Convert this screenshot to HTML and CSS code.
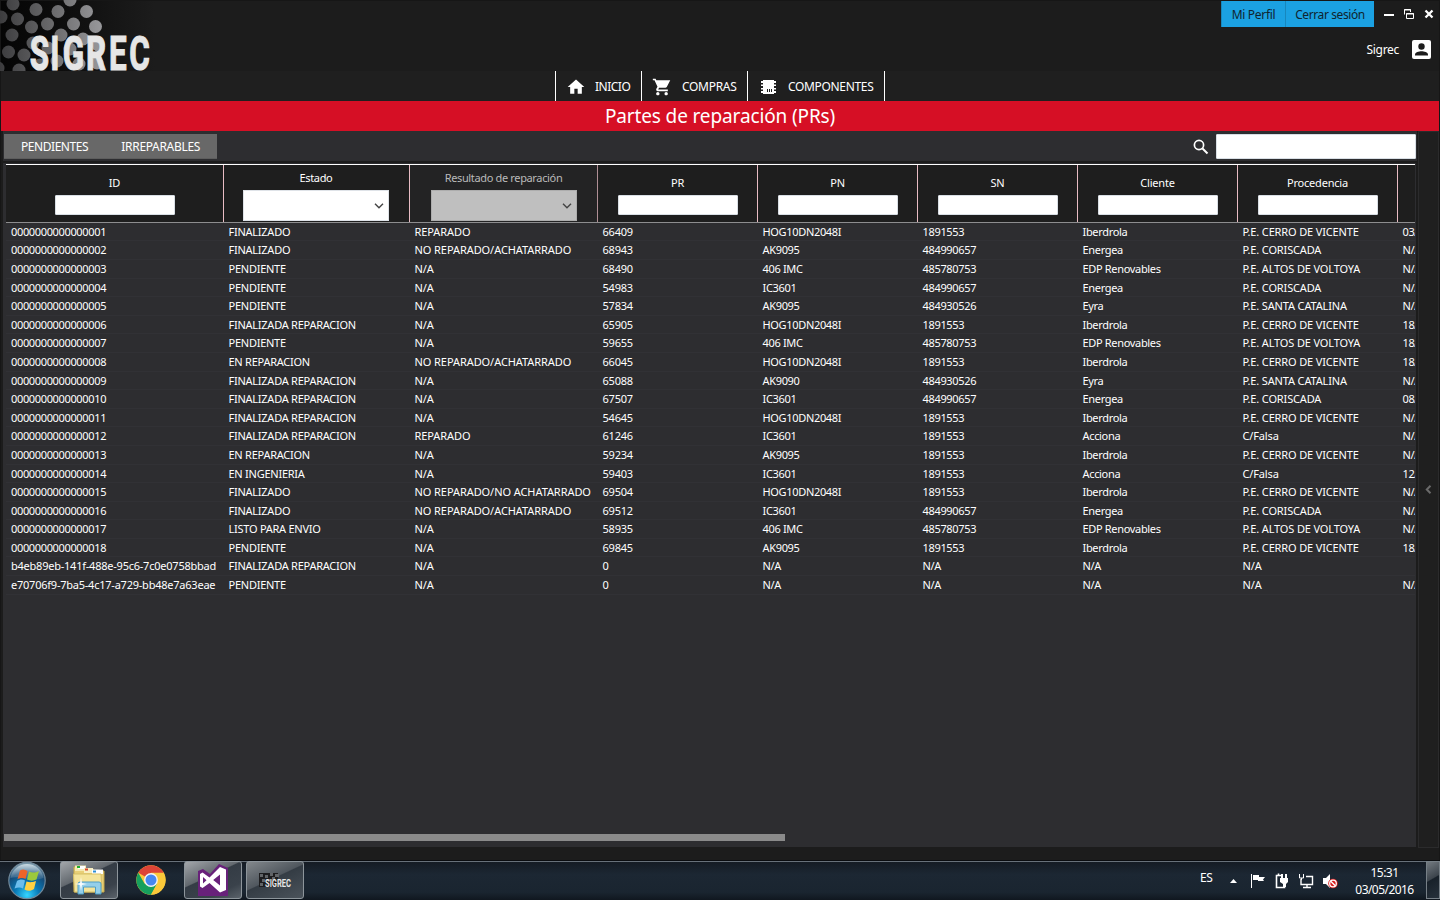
FILE: index.html
```
<!DOCTYPE html>
<html lang="es">
<head>
<meta charset="utf-8">
<title>Sigrec</title>
<link rel="stylesheet" href="styles.css">
</head>
<body>
<div class="window">
  <header class="top">
    <svg class="logo" width="155" height="71" viewBox="0 0 155 71">
      <defs>
        <linearGradient id="fade"><stop offset="0" stop-color="#050505"/><stop offset=".35" stop-color="#0c0c0c"/><stop offset="1" stop-color="#1c1c1c"/></linearGradient>
        <linearGradient id="dots" gradientUnits="userSpaceOnUse" x1="0" y1="30" x2="105" y2="30"><stop offset="0" stop-color="#3c3c3e"/><stop offset=".5" stop-color="#6a6a6c"/><stop offset="1" stop-color="#9b9b9e"/></linearGradient>
      </defs>
      <rect x="1" y="1" width="154" height="70" fill="url(#fade)"/>
      <g fill="url(#dots)">
        <circle cx="13" cy="4" r="6.5"/><circle cx="36" cy="9.500" r="6.500"/><circle cx="58" cy="11.500" r="6.500"/><circle cx="70" cy="0" r="6.500"/><circle cx="86.500" cy="11.500" r="6.500"/>
        <circle cx="1" cy="17" r="6.500"/><circle cx="17.500" cy="19" r="6.500"/><circle cx="31.500" cy="27" r="6.500"/><circle cx="47.500" cy="24" r="6.500"/><circle cx="73.500" cy="24" r="6.500"/><circle cx="95.500" cy="26.500" r="6.500"/>
        <circle cx="12" cy="35" r="6.500"/><circle cx="61" cy="35" r="6.500"/><circle cx="83" cy="39" r="6.500"/><circle cx="33" cy="43" r="6.500"/><circle cx="48" cy="48" r="6.500"/><circle cx="98" cy="45" r="6.500"/><circle cx="70" cy="49" r="6.500"/>
        <circle cx="8.500" cy="52" r="6.500"/><circle cx="24" cy="55" r="6.500"/><circle cx="57" cy="61" r="6.500"/><circle cx="79" cy="64" r="6.500"/><circle cx="40" cy="65" r="6.500"/><circle cx="19" cy="70" r="6.500"/><circle cx="-2" cy="68" r="6.500"/><circle cx="97" cy="63" r="6.500"/>
      </g>
      <text class="logo-text big" transform="scale(.64 1)" x="46.500 78.500 98 134.500 170.500 202" y="70.500" font-size="49">SIGREC</text>
    </svg>
    <div class="account">
      <div class="controls">
        <button class="blue perfil">Mi Perfil</button><button class="blue cerrar">Cerrar sesión</button>
        <svg class="winbtns" width="65" height="27" viewBox="0 0 65 27" fill="none" stroke="#fff">
          <path d="M10 15H20" stroke-width="2"/>
          <path d="M30.500 14.500V9.500H36.500V12M30 10H37M32.500 13.500H39.500V18.500H32.500ZM32 14H40"/>
          <path d="M51.500 10.500L58.500 17.500M58.500 10.500L51.500 17.500" stroke-width="2.300"/>
        </svg>
      </div>
      <div class="user"><span>Sigrec</span>
        <svg width="19" height="19" viewBox="0 0 19 19"><rect width="19" height="19" rx="2" fill="#fff"/><circle cx="9.500" cy="6.500" r="3.200" fill="#1c1c1c"/><path d="M3 15.500V14.500C3 12.300 7 11.200 9.500 11.200S16 12.300 16 14.500V15.500Z" fill="#1c1c1c"/></svg>
      </div>
    </div>
  </header>
  <nav class="nav">
    <a class="n1"><svg width="20" height="20" viewBox="0 0 24 24"><path fill="#fff" d="M10 20v-6h4v6h5v-8h3L12 3 2 12h3v8z"/></svg><span>INICIO</span></a>
    <a class="n2"><svg width="20" height="20" viewBox="0 0 24 24"><path fill="#fff" d="M7 18c-1.100 0-2 .9-2 2s.9 2 2 2 2-.9 2-2-.9-2-2-2zM1 2v2h2l3.600 7.600-1.400 2.400c-.7 1.300.3 3 1.800 3h12v-2H7.400l1.100-2h7.500c.7 0 1.400-.4 1.700-1L21.900 4H5.200L4.300 2H1zm16 16c-1.100 0-2 .9-2 2s.9 2 2 2 2-.9 2-2-.9-2-2-2z"/></svg><span>COMPRAS</span></a>
    <a class="n3"><svg width="15" height="14" viewBox="0 0 15 14"><path fill="#fff" d="M2 0H13V14H2ZM0 1H15V3H0ZM0 4.500H15V6H0ZM0 8H15V9.500H0ZM0 11H15V13H0Z"/><path d="M6.500 9V12M8.500 9V12M10.500 9V12" stroke="#1f1f1f"/></svg><span>COMPONENTES</span></a>
  </nav>
  <h1 class="title"><span>Partes de reparación (PRs)</span></h1>
  <main class="main">
    <div class="content">
      <div class="toolbar">
        <div class="tabs"><span class="t1">PENDIENTES</span><span class="t2">IRREPARABLES</span></div>
        <div class="search">
          <svg width="16" height="16" viewBox="0 0 16 16" fill="none" stroke="#fff"><circle cx="6" cy="6" r="4.600" stroke-width="1.700"/><path d="M9.500 9.500L14.500 14.500" stroke-width="2"/></svg>
          <input type="text" aria-label="Buscar">
        </div>
      </div>
      <div class="panel">
        <div class="table" id="table">
          <div class="row head">
            <div class="th"><label>ID</label><input></div>
            <div class="th combo"><label>Estado</label><div class="select"><svg width="10" height="6" viewBox="0 0 10 6"><path d="M1 .8L5 4.800L9 .8"/></svg></div></div>
            <div class="th combo off"><label>Resultado de reparación</label><div class="select"><svg width="10" height="6" viewBox="0 0 10 6"><path d="M1 .8L5 4.800L9 .8"/></svg></div></div>
            <div class="th"><label>PR</label><input></div>
            <div class="th"><label>PN</label><input></div>
            <div class="th"><label>SN</label><input></div>
            <div class="th"><label>Cliente</label><input></div>
            <div class="th"><label>Procedencia</label><input></div>
            <div class="th last"></div>
          </div>
        </div>
        <div class="scroll"></div>
      </div>
    </div>
    <aside class="side"><svg width="7" height="9" viewBox="0 0 7 9"><path d="M5.500 .8L1.800 4.500L5.500 8.200" fill="none" stroke="#6a6a6a" stroke-width="2"/></svg></aside>
  </main>
</div>
<footer class="taskbar">
  <div class="start">
    <svg width="40" height="39" viewBox="0 0 40 39">
      <defs><radialGradient id="orb" cx=".5" cy=".9" r=".85"><stop offset="0" stop-color="#35d5ff"/><stop offset=".4" stop-color="#0878b5"/><stop offset=".75" stop-color="#164a76"/><stop offset="1" stop-color="#7898aa"/></radialGradient>
      <linearGradient id="gloss" x2="0" y2="1"><stop offset="0" stop-color="#dce8ee" stop-opacity=".85"/><stop offset="1" stop-color="#7ca0b8" stop-opacity=".25"/></linearGradient></defs>
      <circle cx="20" cy="19.500" r="18.200" fill="url(#orb)" stroke="#71899a" stroke-width="1.200"/>
      <path d="M3.500 17A16.700 16.700 0 0 1 36.500 17C27 21 13 14 3.500 17Z" fill="url(#gloss)"/>
      <path d="M13 9.500C16 7.500 18 8.500 20.500 10L18.500 18C16 16.500 14 16.500 10.500 18Z" fill="#ee6428"/>
      <path d="M22 10.500C25 12 28 12 32 10L29.500 18.500C26 20 23.500 20 20 18.500Z" fill="#9cc93c"/>
      <path d="M10 20C13 18 15.500 18 18 19.500L16 27.500C13.500 26 11 26 7.500 27.500Z" fill="#6cbdec"/>
      <path d="M19.500 20.500C22.500 21.500 25 21.500 29 20L27 28C23.500 30.500 20.500 30 17.500 28.500Z" fill="#ffd142"/>
    </svg>
  </div>
  <div class="task files">
    <svg width="34" height="32" viewBox="0 0 34 32">
      <path d="M2 3H12L13 5H21L22 7H32V28H2Z" fill="#e8cf77" stroke="#c6a94b"/>
      <path d="M3 1.500H14V7H3Z" fill="#f5e9b0"/><path d="M6 2H13V5H6Z" fill="#fff"/><path d="M5 2H8V4H5Z" fill="#1fae2c"/>
      <path d="M12 4H21V9H12Z" fill="#f8efc2"/><path d="M13 4.500H16V6.500H13Z" fill="#d8432a"/><path d="M20 5.500H31V10H20Z" fill="#fff"/><path d="M21 6.500H24V8.500H21Z" fill="#2d8ed8"/>
      <path d="M1.500 10H29L30 28H2.500Z" fill="#f4e49b" stroke="#d6bf66"/>
      <path d="M6 30V20Q6 18 8 18H27Q29 18 29 20V30H23.500V23H11.500V30Z" fill="#94cfea" stroke="#4e9ec5"/>
      <path d="M9 13L10 19L15 20L10 21L9 27L8 21L3 20L8 19Z" fill="#fff" opacity=".9"/>
    </svg>
  </div>
  <div class="chrome">
    <svg width="30" height="30" viewBox="0 0 30 30"><circle cx="15" cy="15" r="14.700" fill="#fbc93a"/><path d="M15 15L2.300 7.650A14.700 14.700 0 0 1 27.700 7.650H15Z" fill="#dc4437"/><path d="M2.300 7.650A14.700 14.700 0 0 0 15 29.700L21.400 18.700L15 15L8.600 18.700Z" fill="#16a05d"/><path d="M15 8H27.700A14.700 14.700 0 0 1 15 29.700L21 18.500Z" fill="#fbc93a"/><circle cx="15" cy="15" r="6.900" fill="#f4f4f4"/><circle cx="15" cy="15" r="5.500" fill="#4688f1"/></svg>
  </div>
  <div class="task vs">
    <svg width="30" height="32" viewBox="0 0 30 32"><path d="M0 7L5 5L12 10L21 0L30 4V32H0Z" fill="#68217a"/><path d="M22 3L28 5.500V26L22 28.500L11.500 19L4.500 24L2 22.500V10L4.500 8.500L11.500 13.500Z" fill="#fff"/><path d="M22 10.500V21.500L15.200 16ZM5 13V19.500L8.500 16.200Z" fill="#68217a"/></svg>
  </div>
  <div class="task app">
    <svg width="34" height="18" viewBox="0 0 34 18"><path d="M1 2H20V16H1Z" fill="#1d1d1f"/><path d="M2 3h3v3h-3zM7 4h3v3h-3zM12 2h3v3h-3zM17 3h4v3h-4zM4 8h3v3h-3zM9 8h3v2h-3zM14 6h3v3h-3zM2 12h3v3h-3z" fill="#626568"/><text class="logo-text" x="7" y="16" font-size="10" textLength="26" lengthAdjust="spacingAndGlyphs">SIGREC</text></svg>
  </div>
  <div class="tray">
    <span class="lang">ES</span>
    <svg width="112" height="20" viewBox="0 0 112 20">
      <path d="M3 13L6.500 9L10 13Z" fill="#fff"/>
      <path d="M24.500 4V18" stroke="#fff"/><path d="M26 5H32V7H38L36 9.500L37 11H31V10H26Z" fill="#fff"/>
      <path d="M54 5.500H49.500V17.500H57.500V15.500M51.500 3.500V5" stroke="#fff" stroke-width="1.600" fill="none"/><path d="M53 8H61V12L59 14V17H56V14L53 12ZM54 4H56V8H54ZM58 4H60V8H58Z" fill="#fff"/>
      <path d="M79 6.500H85.500V14.500H74V9M80 15V17M76 17.500H84" stroke="#fff" stroke-width="1.400" fill="none"/><path d="M72.500 4V8H76.500V4M74.500 8V10" stroke="#fff" fill="none"/>
      <path d="M96 8H99L103 4V18L99 14H96Z" fill="#fff"/><circle cx="106" cy="13.500" r="4.800" fill="#d91c1c"/><circle cx="106" cy="13.500" r="3.300" fill="none" stroke="#fff" stroke-width="1.300"/><path d="M103.700 11.200L108.300 15.800" stroke="#fff" stroke-width="1.400"/>
    </svg>
    <div class="clock"><span>15:31</span><span>03/05/2016</span></div>
    <div class="peek"></div>
  </div>
</footer>
<script src="table.js"></script>
</body>
</html>
```
FILE: styles.css
```
* { box-sizing: border-box; }
body { margin: 0; width: 1440px; height: 900px; overflow: hidden; background: #1c1c1c; color: #fff; font-family: "Noto Sans", sans-serif; font-size: 11px; display: flex; flex-direction: column; }
svg { display: block; flex: none; }
span, label { white-space: nowrap; }
.window { height: 860px; border: 1px solid #161616; border-width: 1px 1px 0; display: flex; flex-direction: column; }
.top { height: 70px; display: flex; justify-content: space-between; }
.logo { margin: -1px 0 0 -1px; }
.logo-text { font-family: Roboto, sans-serif; font-weight: 700; fill: #e6e6e6; }
.big { stroke: #e6e6e6; stroke-width: 1.2px; stroke-linejoin: miter; }
.account { width: 218px; }
.controls { height: 26px; display: flex; }
.blue { flex: none; height: 26px; border: 0; border-left: 1px solid #1787bd; padding: 1px 0 0; background: #1ba1e2; color: #10242e; font: 12px "Noto Sans", sans-serif; white-space: nowrap; }
.perfil { width: 64px; letter-spacing: -.3px; }
.cerrar { width: 89px; letter-spacing: -.4px; }
.winbtns { margin-top: -1px; }
.user { display: flex; justify-content: flex-end; align-items: center; gap: 13px; height: 19px; margin: 13px 8px 0 0; font-size: 12px; letter-spacing: -.3px; }
.nav { height: 30px; background: #1f1f1f; display: flex; padding-left: 554px; font-size: 12px; }
.nav a { display: flex; align-items: center; border-left: 1px solid #fff; padding-top: 1px; }
.n1 { width: 86px; padding-left: 10px; gap: 9px; letter-spacing: -.5px; }
.n2 { width: 106px; padding-left: 10px; gap: 10px; letter-spacing: -.3px; }
.nav .n3 { width: 138px; padding-left: 13px; gap: 12px; letter-spacing: -.33px; border-right: 1px solid #fff; }
.title { height: 30px; margin: 0; background: #d60f25; display: flex; justify-content: center; align-items: center; font-weight: 400; font-size: 19px; letter-spacing: -.13px; }
.main { flex: 1; display: flex; }
.content { width: 1416px; padding-left: 2px; }
.toolbar { height: 30px; background: #2d2d30; display: flex; justify-content: space-between; padding: 3px 1px 0 1px; }
.tabs { width: 213px; height: 25px; background: #686868; border-bottom: 1px solid #5d5d5d; display: flex; align-items: center; font-size: 12px; padding: 1px 17px 0 17px; justify-content: space-between; }
.t1 { letter-spacing: -.45px; }
.t2 { letter-spacing: -.32px; }
.search { display: flex; gap: 7px; align-items: center; height: 25px; }
input { display: block; background: #fff; border: 1px solid #d9dfe5; border-radius: 1px; padding: 0; }
.search input { width: 200px; height: 25px; }
.panel { height: 684px; margin-top: 2px; width: 1413px; background: #2d2d30; padding: 1px 1px 0 1px; display: flex; flex-direction: column; }
.table { width: 1409px; margin-left: 2px; overflow: hidden; }
.row { display: grid; grid-template-columns: 218px 186px 188px 160px 160px 160px 160px 160px 160px; height: 18.6px; border-bottom: 1px solid #313135; width: 1550px; }
.cell { padding-left: 4.5px; line-height: 18.5px; white-space: nowrap; letter-spacing: -.2px; }
.cell:first-child { padding-left: 5px; letter-spacing: -.35px; }
.cell.guid { letter-spacing: -.23px; }
.cell:nth-child(2) { letter-spacing: -.25px; }
.cell:nth-child(3) { letter-spacing: -.07px; }
.cell:nth-child(5), .cell:nth-child(6), .cell:nth-child(7) { letter-spacing: -.33px; }
.cell:nth-child(8) { letter-spacing: -.15px; }
.cell:nth-child(9) { letter-spacing: -.4px; }
.head { height: 58.8px; background: #1e1e1e; border-top: 1px solid #fff; border-bottom: 1px solid #8d8d8f; }
.th { display: flex; flex-direction: column; align-items: center; border-right: 1px solid #e8bcc4; padding-top: 10px; letter-spacing: -.2px; }
.th label { height: 15px; line-height: 15px; }
.th input { width: 120px; height: 20px; margin-top: 5px; }
.th.combo { padding: 5px 1px 0 0; letter-spacing: -.35px; }
.th.off { padding-right: 0; }
.select { width: 146px; height: 31px; margin-top: 5px; background: #fff; border: 1px solid #dfe3e8; display: flex; align-items: center; justify-content: flex-end; padding-right: 4px; }
.select path { fill: none; stroke: #444; stroke-width: 1.4; }
.off { background: #232324; color: #bababa; border-right-color: #af8f95; }
.off .select { background: #bfbfbf; border-color: #adadad; }
.scroll { width: 781px; height: 7px; background: #8a8a8a; margin: auto 0 6px 0; }
.side { width: 21px; height: 717px; margin-left: 1px; background: #1f1f1f; border: 1px solid #2b2b2c; display: flex; align-items: center; justify-content: center; padding-right: 1px; }
.taskbar { height: 40px; background: linear-gradient(#151b23, #1c2733 35%, #1a2530 80%, #10171f); border-top: 1px solid #0a0c0f; box-shadow: inset 0 1px #68717a; display: flex; align-items: center; padding-bottom: 1px; }
.start { width: 60px; padding-left: 7px; }
.task { width: 58px; height: 38px; border: 1px solid #8d959b; border-radius: 3px; background: linear-gradient(155deg, #a2a6aa 0, #62686e 40%, #343c45 42%, #3a424b 75%, #5b636b 100%); display: flex; align-items: center; justify-content: center; }
.chrome { width: 66px; padding-left: 18px; }
.app { margin-left: 4px; background: linear-gradient(155deg, #83888c 0, #50575e 45%, #343c44 47%, #4b535b 100%); }
.tray { margin-left: auto; display: flex; align-items: center; height: 38px; }
.lang { width: 28px; font-size: 12px; letter-spacing: -.4px; margin: -5px 0 0 -1px; }
.tray svg { margin: 0 1px 0 -1px; }
.clock { width: 84px; display: flex; flex-direction: column; align-items: center; font-size: 12px; line-height: 17px; letter-spacing: -.55px; margin: 2px 1px 0 1px; padding-left: 3px; }
.peek { width: 14px; height: 38px; border: 1px solid #778087; background: linear-gradient(150deg, #737a80, #3d454d 45%, #18212a 48%, #27313b); }
```
FILE: table.js
```
const rows = `1|FINALIZADO|REPARADO|66409|HOG10DN2048I|1891553|Iberdrola|P.E. CERRO DE VICENTE|03/
2|FINALIZADO|NO REPARADO/ACHATARRADO|68943|AK9095|484990657|Energea|P.E. CORISCADA|N/A
3|PENDIENTE|N/A|68490|406 IMC|485780753|EDP Renovables|P.E. ALTOS DE VOLTOYA|N/A
4|PENDIENTE|N/A|54983|IC3601|484990657|Energea|P.E. CORISCADA|N/A
5|PENDIENTE|N/A|57834|AK9095|484930526|Eyra|P.E. SANTA CATALINA|N/A
6|FINALIZADA REPARACION|N/A|65905|HOG10DN2048I|1891553|Iberdrola|P.E. CERRO DE VICENTE|18/
7|PENDIENTE|N/A|59655|406 IMC|485780753|EDP Renovables|P.E. ALTOS DE VOLTOYA|18/
8|EN REPARACION|NO REPARADO/ACHATARRADO|66045|HOG10DN2048I|1891553|Iberdrola|P.E. CERRO DE VICENTE|18/
9|FINALIZADA REPARACION|N/A|65088|AK9090|484930526|Eyra|P.E. SANTA CATALINA|N/A
10|FINALIZADA REPARACION|N/A|67507|IC3601|484990657|Energea|P.E. CORISCADA|08/
11|FINALIZADA REPARACION|N/A|54645|HOG10DN2048I|1891553|Iberdrola|P.E. CERRO DE VICENTE|N/A
12|FINALIZADA REPARACION|REPARADO|61246|IC3601|1891553|Acciona|C/Falsa|N/A
13|EN REPARACION|N/A|59234|AK9095|1891553|Iberdrola|P.E. CERRO DE VICENTE|N/A
14|EN INGENIERIA|N/A|59403|IC3601|1891553|Acciona|C/Falsa|12/
15|FINALIZADO|NO REPARADO/NO ACHATARRADO|69504|HOG10DN2048I|1891553|Iberdrola|P.E. CERRO DE VICENTE|N/A
16|FINALIZADO|NO REPARADO/ACHATARRADO|69512|IC3601|484990657|Energea|P.E. CORISCADA|N/A
17|LISTO PARA ENVIO|N/A|58935|406 IMC|485780753|EDP Renovables|P.E. ALTOS DE VOLTOYA|N/A
18|PENDIENTE|N/A|69845|AK9095|1891553|Iberdrola|P.E. CERRO DE VICENTE|18/
b4eb89eb-141f-488e-95c6-7c0e0758bbad|FINALIZADA REPARACION|N/A|0|N/A|N/A|N/A|N/A|
e70706f9-7ba5-4c17-a729-bb48e7a63eae|PENDIENTE|N/A|0|N/A|N/A|N/A|N/A|N/A`;
const table = document.getElementById("table");
for (const line of rows.split("\n")) {
  const row = document.createElement("div");
  row.className = "row";
  line.split("|").forEach((value, i) => {
    const cell = document.createElement("div");
    cell.className = value.length > 30 ? "cell guid" : "cell";
    cell.textContent = i === 0 ? value.padStart(16, "0") : value;
    row.append(cell);
  });
  table.append(row);
}
```
